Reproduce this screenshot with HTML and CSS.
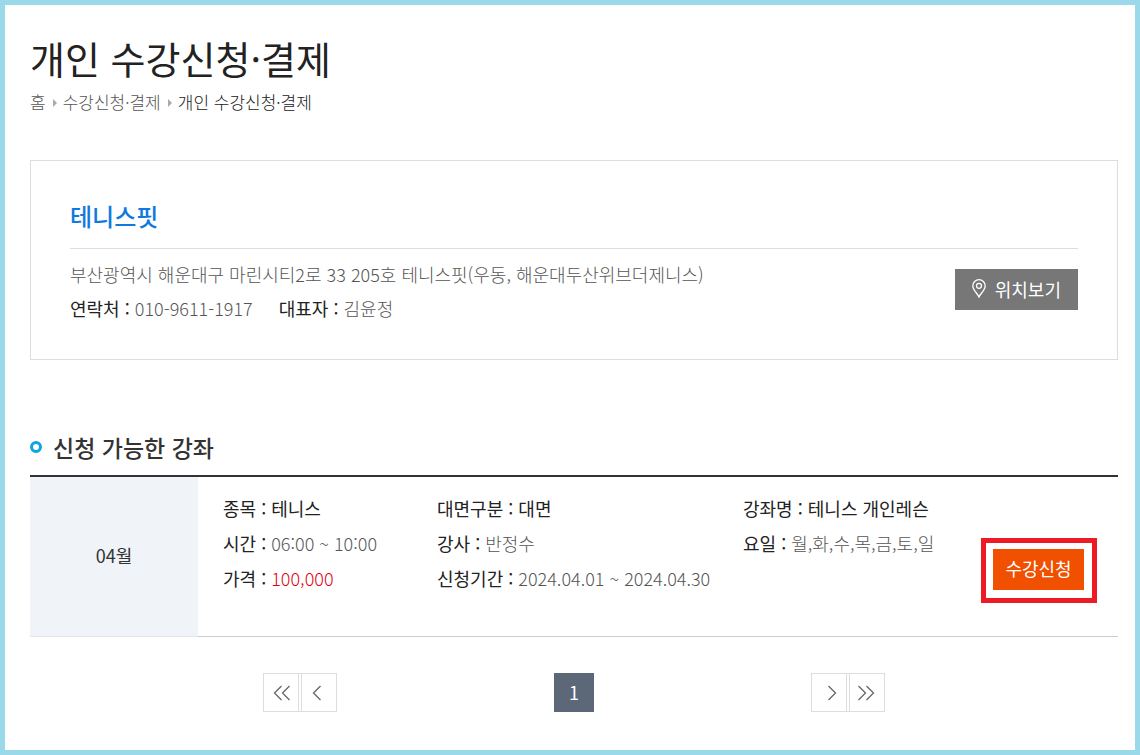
FILE: index.html
```html
<!DOCTYPE html>
<html lang="ko">
<head>
  <meta charset="UTF-8">
  <meta name="viewport" content="width=device-width, initial-scale=1.0">
  <title>개인 수강신청·결제</title>
  <link rel="stylesheet" href="styles.css">
</head>
<body>
  <main class="page">
    <h1>개인 수강신청·결제</h1>
    <nav class="breadcrumb">
      <a href="#">홈</a>
      <a href="#">수강신청·결제</a>
      <a href="#" class="current">개인 수강신청·결제</a>
    </nav>

    <section class="facility">
      <h2>테니스핏</h2>
      <div class="facility-body">
        <div class="facility-info">
          <p>부산광역시 해운대구 마린시티2로 33 205호 테니스핏(우동, 해운대두산위브더제니스)</p>
          <p class="contact">
            <span><b>연락처 :</b> 010-9611-1917</span>
            <span><b>대표자 :</b> 김윤정</span>
          </p>
        </div>
        <button type="button" class="btn btn-map">
          <svg width="14" height="19" viewBox="0 0 14 19" fill="none" stroke="currentColor" stroke-width="1.3">
            <path d="M7 18C5.8 14.8 .8 11 .8 6.9a6.2 6.2 0 0 1 12.4 0C13.2 11 8.2 14.8 7 18z"/>
            <circle cx="7" cy="6.8" r="2.5"/>
          </svg>
          위치보기
        </button>
      </div>
    </section>

    <h3>신청 가능한 강좌</h3>
    <table class="courses">
      <tr>
        <th scope="row">04월</th>
        <td class="detail">
          <div class="detail-grid">
            <ul>
              <li><b>종목 : 테니스</b></li>
              <li><b>시간 :</b> 06:00 ~ 10:00</li>
              <li><b>가격 :</b> <span class="price">100,000</span></li>
            </ul>
            <ul>
              <li><b>대면구분 : 대면</b></li>
              <li><b>강사 :</b> 반정수</li>
              <li><b>신청기간 :</b> 2024.04.01 ~ 2024.04.30</li>
            </ul>
            <ul>
              <li><b>강좌명 : 테니스 개인레슨</b></li>
              <li><b>요일 :</b> 월,화,수,목,금,토,일</li>
            </ul>
          </div>
        </td>
        <td class="action">
          <div class="highlight">
            <button type="button" class="btn btn-apply">수강신청</button>
          </div>
        </td>
      </tr>
    </table>

    <nav class="paging">
      <div class="paging-group">
        <a href="#" aria-label="처음"><svg width="18" height="16" viewBox="0 0 18 16"><path d="M9.5 1l-7 7 7 7M17.5 1l-7 7 7 7"/></svg></a>
        <a href="#" aria-label="이전"><svg width="18" height="16" viewBox="0 0 18 16"><path d="M10.5 1l-7 7 7 7"/></svg></a>
      </div>
      <a href="#" class="num">1</a>
      <div class="paging-group">
        <a href="#" aria-label="다음"><svg width="18" height="16" viewBox="0 0 18 16"><path d="M8.5 1l7 7-7 7"/></svg></a>
        <a href="#" aria-label="마지막"><svg width="18" height="16" viewBox="0 0 18 16"><path d="M.5 1l7 7-7 7M8.5 1l7 7-7 7"/></svg></a>
      </div>
    </nav>
  </main>
</body>
</html>
```
FILE: styles.css
```css
*, *::before {
  box-sizing: border-box;
}
body {
  margin: 0;
  font-family: "Noto Sans CJK KR", "Noto Sans", sans-serif;
  font-size: 18px;
  font-weight: 300;
  color: #555;
}
h1, h2, h3, p, ul {
  margin: 0;
  padding: 0;
}
ul {
  list-style: none;
}
a {
  color: inherit;
  text-decoration: none;
}
b {
  font-weight: 400;
  color: #222;
}
.page {
  min-height: 100vh;
  padding: 29px 17px 38px 25px;
  border: 5px solid #9ad9ea;
  background: #fff;
}
h1 {
  padding-bottom: 3px;
  font-size: 38px;
  font-weight: 400;
  line-height: 48px;
  color: #222;
}

/* Breadcrumb */
.breadcrumb {
  display: flex;
  font-size: 17px;
  line-height: 34px;
}
.breadcrumb a + a::before {
  content: "";
  display: inline-block;
  margin: 0 6px 2px 7px;
  border: 4px solid transparent;
  border-left-color: #aaa;
  border-right: 0;
}
.breadcrumb .current {
  color: #222;
}

/* Facility card */
.facility {
  margin-top: 41px;
  padding: 31px 39px 34px;
  border: 1px solid #ddd;
}
.facility h2 {
  padding-bottom: 8px;
  border-bottom: 1px solid #ddd;
  font-size: 24px;
  font-weight: 500;
  line-height: 48px;
  color: #0f79e0;
}
.facility-body {
  display: flex;
  justify-content: space-between;
  padding-top: 8px;
}
.facility-info {
  line-height: 34px;
}
.contact {
  display: flex;
  gap: 26px;
}
.btn {
  height: 41px;
  padding: 0 0 3px;
  border: 0;
  font: inherit;
  font-weight: 400;
  color: #fff;
  cursor: pointer;
}
.btn-map {
  display: flex;
  align-items: center;
  gap: 9px;
  margin-top: 12px;
  padding: 0 17px 2px;
  background: #777;
}

/* Course list */
h3 {
  display: flex;
  align-items: center;
  gap: 11px;
  margin-top: 67px;
  padding-bottom: 8px;
  font-size: 23px;
  font-weight: 500;
  line-height: 40px;
  color: #333;
}
h3::before {
  content: "";
  width: 12px;
  height: 12px;
  border: 3px solid #0aa5e2;
  border-radius: 50%;
}
.courses {
  width: 100%;
  border-top: 2px solid #333;
  border-spacing: 0;
}
.courses th {
  width: 168px;
  padding: 0 0 4px;
  border-bottom: 1px solid #e4e4e4;
  background: #f0f4f8;
  font-weight: 400;
  color: #333;
}
.courses td {
  padding: 0;
  border-bottom: 1px solid #ccc;
}
.courses .detail {
  padding: 14px 0 40px 25px;
}
.detail-grid {
  display: grid;
  grid-template-columns: 214fr 306fr 238fr;
  line-height: 35px;
}
.price {
  color: #e60012;
}
.courses .action {
  width: 137px;
  padding-top: 28px;
}
.highlight {
  width: 116px;
  padding: 6px 7px 8px;
  border: 5px solid #ed1c24;
}
.btn-apply {
  display: block;
  width: 91px;
  background: #f05000;
}

/* Paging */
.paging {
  display: flex;
  justify-content: space-between;
  width: 622px;
  max-width: 100%;
  margin: 36px auto 0;
}
.paging-group {
  display: flex;
  justify-content: space-between;
  width: 74px;
  height: 39px;
  border: 1px solid #ddd;
}
.paging-group a {
  display: flex;
  align-items: center;
  justify-content: center;
  width: 35px;
}
.paging-group a:first-child {
  border-right: 1px solid #ddd;
}
.paging-group a:last-child {
  border-left: 1px solid #ddd;
}
.paging-group svg {
  fill: none;
  stroke: #666;
  stroke-width: 1.3;
}
.paging .num {
  width: 40px;
  height: 39px;
  background: #5c6878;
  font-weight: 400;
  line-height: 39px;
  text-align: center;
  color: #fff;
}
```
